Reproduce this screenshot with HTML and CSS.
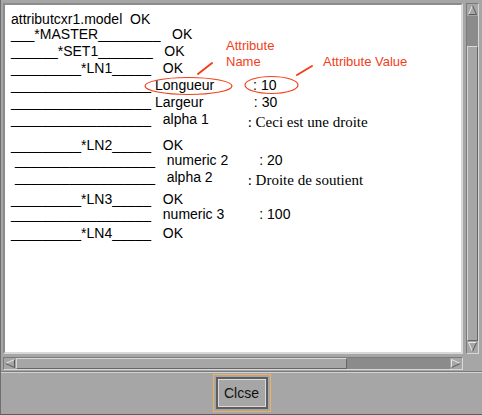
FILE: index.html
```html
<!DOCTYPE html>
<html lang="fr">

<head>
  <meta charset="UTF-8">
  <title>attributcxr1.model</title>
  <link rel="stylesheet" href="styles.css">
</head>

<body>
  <div class="dialog">
    <div class="work">
      <div class="pane">
        <div class="listing">
          <div class="row short">attributcxr1.model  OK</div>
          <div class="row">___*MASTER________   OK</div>
          <div class="row">______*SET1_______   OK</div>
          <div class="row">_________*LN1_____   OK</div>
          <div class="row">__________________ Longueur          : 10</div>
          <div class="row">__________________ Largeur             : 30</div>
          <div class="row gap-lg">__________________   alpha 1          <span class="serif">: Ceci est une droite</span></div>
          <div class="row short">_________*LN2_____   OK</div>
          <div class="row"> __________________   numeric 2        : 20</div>
          <div class="row gap-md"> __________________   alpha 2         <span class="serif">: Droite de soutient</span></div>
          <div class="row short">_________*LN3_____   OK</div>
          <div class="row gap-sm">__________________   numeric 3         : 100</div>
          <div class="row">_________*LN4_____   OK</div>
        </div>

        <!-- hand-drawn annotations over the listing -->
        <svg class="marks" width="456" height="347" viewBox="0 0 456 347">
          <ellipse cx="183.5" cy="81" rx="43.5" ry="8.5" />
          <ellipse cx="266.5" cy="80" rx="26.5" ry="8.5" />
          <path d="M193 69 L207 58" />
          <path d="M292 70 L307 61" />
        </svg>
        <div class="label label-name">Attribute<br>Name</div>
        <div class="label label-value">Attribute Value</div>
      </div>

      <div class="vbar">
        <svg class="arrow" width="11" height="12" viewBox="0 0 11 12">
          <polygon points="5.5,1.5 1.5,10.5 9.5,10.5" fill="#a6a6a6" />
          <path d="M1.5 10.5 L5.5 1.5" stroke="#e8e8e8" fill="none" />
          <path d="M5.5 1.5 L9.5 10.5 L1.5 10.5" stroke="#5a5a5a" fill="none" />
        </svg>
        <div class="spacer"></div>
        <div class="thumb"></div>
        <svg class="arrow" width="11" height="12" viewBox="0 0 11 12">
          <polygon points="1.5,1.5 9.5,1.5 5.5,10.5" fill="#a6a6a6" />
          <path d="M5.5 10.5 L1.5 1.5 L9.5 1.5" stroke="#e8e8e8" fill="none" />
          <path d="M9.5 1.5 L5.5 10.5" stroke="#5a5a5a" fill="none" />
        </svg>
      </div>

      <div class="hbar">
        <svg class="arrow" width="12" height="11" viewBox="0 0 12 11">
          <polygon points="1.5,5.5 10.5,1.5 10.5,9.5" fill="#a6a6a6" />
          <path d="M1.5 5.5 L10.5 1.5" stroke="#e8e8e8" fill="none" />
          <path d="M10.5 1.5 L10.5 9.5 L1.5 5.5" stroke="#5a5a5a" fill="none" />
        </svg>
        <div class="thumb"></div>
        <div class="trough"></div>
        <svg class="arrow" width="12" height="11" viewBox="0 0 12 11">
          <polygon points="1.5,1.5 10.5,5.5 1.5,9.5" fill="#a6a6a6" />
          <path d="M1.5 9.5 L1.5 1.5 L10.5 5.5" stroke="#e8e8e8" fill="none" />
          <path d="M10.5 5.5 L1.5 9.5" stroke="#5a5a5a" fill="none" />
        </svg>
      </div>

      <div class="corner"></div>
    </div>

    <div class="actions">
      <div class="focus">
        <button class="close">Clcse</button>
      </div>
    </div>
  </div>
</body>

</html>
```

FILE: styles.css
```css
*,
*::before,
*::after {
  box-sizing: border-box;
}

:root {
  --face: #a6a6a6;
  --trough: #8b8b8b;
  --light: #d8d8d8;
  --shadow: #666666;
  --mark: #f2401c;
}

html,
body {
  margin: 0;
  padding: 0;
  background: var(--face);
  font-family: 'Liberation Sans', Arial, sans-serif;
  font-size: 14px;
  color: #000;
}

.dialog {
  width: 482px;
  height: 415px;
  display: flex;
  flex-direction: column;
  border-left: 1px solid #6e6e6e;
  border-bottom: 1px solid #5c5c5c;
}

.work {
  display: grid;
  grid-template-columns: 460px 13px;
  grid-template-rows: 351px 13px;
  gap: 3px;
  padding: 3px 0 1px 2px;
  border-bottom: 1px solid #7a7a7a;
}

/* text pane */
.pane {
  position: relative;
  background: #fff;
  border: 2px solid;
  border-color: #8c8c8c var(--light) var(--light) #8c8c8c;
  overflow: hidden;
}

.listing {
  padding: 6px 0 0 6px;
}

.row {
  white-space: pre;
  height: 17px;
  line-height: 17px;
}

.row.short {
  height: 15px;
}

.row.gap-sm {
  height: 19px;
}

.row.gap-md {
  height: 22px;
}

.row.gap-lg {
  height: 26px;
}

.serif {
  font-family: 'Liberation Serif', 'Times New Roman', serif;
  font-size: 15px;
  vertical-align: -3px;
}

.marks {
  position: absolute;
  top: 0;
  left: 0;
  fill: none;
  stroke: var(--mark);
  stroke-width: 1.2;
}

.marks path {
  stroke-width: 2;
  stroke-linecap: round;
}

.label {
  position: absolute;
  color: var(--mark);
  font-size: 13px;
  line-height: 16px;
}

.label-name {
  top: 33px;
  left: 221px;
}

.label-value {
  top: 49px;
  left: 318px;
}

/* scrollbars */
.vbar,
.hbar {
  display: flex;
  background: var(--trough);
  border: 1px solid;
  border-color: #7a7a7a var(--light) var(--light) #7a7a7a;
}

.vbar {
  flex-direction: column;
}

.arrow {
  display: block;
  flex: none;
  background: var(--face);
}

.vbar .spacer {
  height: 30px;
}

.thumb {
  background: var(--face);
  border: 1px solid;
  border-color: var(--light) var(--shadow) var(--shadow) var(--light);
}

.vbar .thumb {
  flex: 1;
}

.hbar .thumb {
  width: 331px;
}

.hbar .trough {
  flex: 1;
}

/* bottom button row */
.actions {
  flex: 1;
  display: flex;
  justify-content: center;
  align-items: flex-start;
  padding-top: 1px;
  border-top: 1px solid #d2d2d2;
}

.focus {
  border: 1px solid #f0b062;
  padding: 2px;
}

.close {
  display: block;
  width: 52px;
  height: 32px;
  margin: 0;
  padding: 0;
  background: var(--face);
  color: #111;
  font-family: 'Liberation Sans', Arial, sans-serif;
  font-size: 14px;
  border: 2px solid #5e5e5e;
  box-shadow: inset 0 0 0 1px #dadada;
  cursor: pointer;
}
```
